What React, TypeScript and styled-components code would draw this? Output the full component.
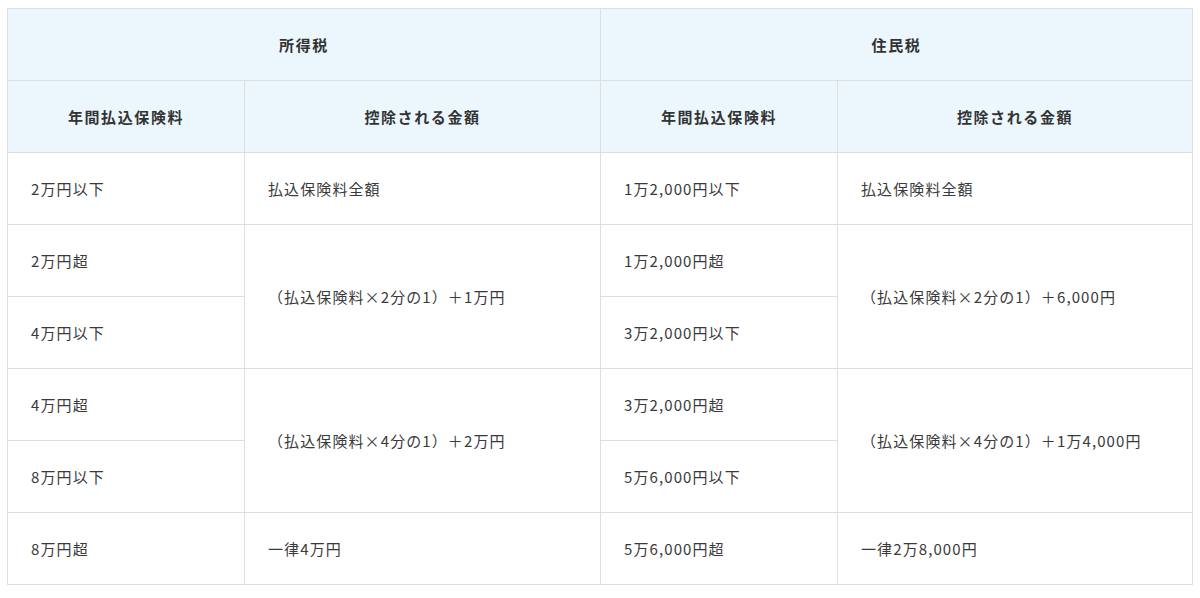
import styled, { createGlobalStyle } from "styled-components";

const GlobalStyle = createGlobalStyle`
  body {
    margin: 0;
    padding: 8px 8px 0 7px;
    background: #fff;
    font-family: "Noto Sans CJK JP", "Noto Sans", sans-serif;
  }
`

const Table = styled.table`
  width: 1185px;
  border-collapse: collapse;
  table-layout: fixed;
  font-size: 15px;
  color: #3a3a3a;
`

const Th = styled.th`
  height: 71px;
  padding: 0;
  background: #ebf7fd;
  border: 1px solid #dedede;
  font-weight: bold;
  text-align: center;
  letter-spacing: 1.6px;
  color: #333;
`

const Td = styled.td`
  height: 71px;
  padding: 0 23px;
  border: 1px solid #dedede;
  text-align: left;
  vertical-align: middle;
  letter-spacing: 1.1px;
`

type Row = {
  incomeRange: string
  incomeAmount?: string
  incomeSpan?: number
  residentRange: string
  residentAmount?: string
  residentSpan?: number
}

const rows: Row[] = [
  { incomeRange: '2万円以下', incomeAmount: '払込保険料全額', residentRange: '1万2,000円以下', residentAmount: '払込保険料全額' },
  { incomeRange: '2万円超', incomeAmount: '（払込保険料×2分の1）＋1万円', incomeSpan: 2, residentRange: '1万2,000円超', residentAmount: '（払込保険料×2分の1）＋6,000円', residentSpan: 2 },
  { incomeRange: '4万円以下', residentRange: '3万2,000円以下' },
  { incomeRange: '4万円超', incomeAmount: '（払込保険料×4分の1）＋2万円', incomeSpan: 2, residentRange: '3万2,000円超', residentAmount: '（払込保険料×4分の1）＋1万4,000円', residentSpan: 2 },
  { incomeRange: '8万円以下', residentRange: '5万6,000円以下' },
  { incomeRange: '8万円超', incomeAmount: '一律4万円', residentRange: '5万6,000円超', residentAmount: '一律2万8,000円' },
]

const App = () => {
  return (
    <>
      <GlobalStyle />
      <Table>
        <colgroup>
          <col style={{ width: 237 }} />
          <col style={{ width: 356 }} />
          <col style={{ width: 237 }} />
          <col style={{ width: 355 }} />
        </colgroup>
        <thead>
          <tr>
            <Th colSpan={2}>所得税</Th>
            <Th colSpan={2}>住民税</Th>
          </tr>
          <tr>
            <Th>年間払込保険料</Th>
            <Th>控除される金額</Th>
            <Th>年間払込保険料</Th>
            <Th>控除される金額</Th>
          </tr>
        </thead>
        <tbody>
          {rows.map((row) => (
            <tr key={row.incomeRange}>
              <Td>{row.incomeRange}</Td>
              {row.incomeAmount && <Td rowSpan={row.incomeSpan}>{row.incomeAmount}</Td>}
              <Td>{row.residentRange}</Td>
              {row.residentAmount && <Td rowSpan={row.residentSpan}>{row.residentAmount}</Td>}
            </tr>
          ))}
        </tbody>
      </Table>
    </>
  )
}

export default App;
